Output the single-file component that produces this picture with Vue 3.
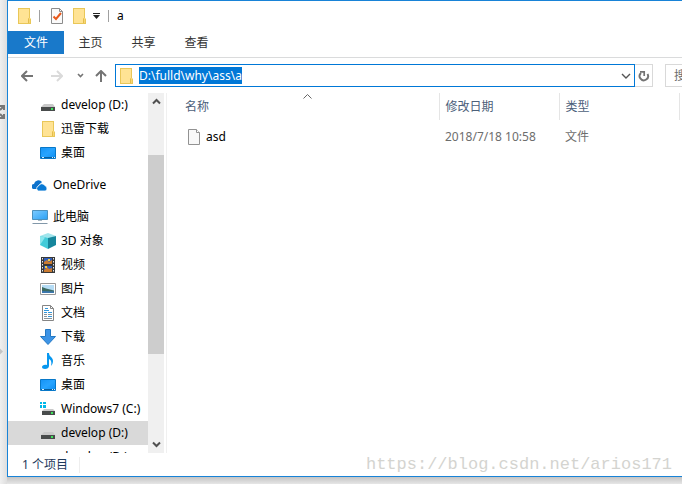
<template>
  <div class="desktop">
    <span class="backdrop-arrow">
      <svg width="5" height="14" viewBox="0 0 5 14">
        <path d="M0 1h4v4M0 5l4-4M0 9l4 4M0 13h4V9" fill="none" stroke="#777" stroke-width="2" />
      </svg>
    </span>
    <span class="backdrop-dot"></span>

    <main class="window">
      <header class="titlebar">
        <svg class="icon" viewBox="0 0 16 16"><use href="#i-folder" /></svg>
        <span class="bar"></span>
        <button class="plain" aria-label="属性">
          <svg class="icon" viewBox="0 0 16 16">
            <path d="M2.500.5h8l3 3v12h-11z" fill="#fafafa" stroke="#8c8c8c" />
            <path d="M10.500.5v3h3" fill="none" stroke="#8c8c8c" />
            <path d="M4.500 8.500l2.500 2.500 5-6" fill="none" stroke="#e8591c" stroke-width="2" />
          </svg>
        </button>
        <button class="plain" aria-label="新建文件夹">
          <svg class="icon" viewBox="0 0 16 16"><use href="#i-folder" /></svg>
        </button>
        <button class="plain more" aria-label="自定义">
          <svg width="7" height="6" viewBox="0 0 7 6"><path d="M0 0h7v1H0zM0 2h7L3.500 6z" fill="#222" /></svg>
        </button>
        <span class="bar"></span>
        <span class="title">a</span>
      </header>

      <nav class="tabs">
        <button v-for="tab in tabs" :key="tab" :class="{ active: tab === activeTab }" @click="activeTab = tab">
          {{ tab }}
        </button>
      </nav>

      <div class="toolbar">
        <div class="nav-buttons">
          <button class="plain" aria-label="后退">
            <svg width="12" height="12" viewBox="0 0 12 12"><path d="M12 6H1M6 1L1 6l5 5" fill="none" stroke="#747474" stroke-width="2" /></svg>
          </button>
          <button class="plain forward" aria-label="前进">
            <svg width="12" height="12" viewBox="0 0 12 12"><path d="M0 6h11M6 1l5 5-5 5" fill="none" stroke="#dadada" stroke-width="2" /></svg>
          </button>
          <button class="plain recent" aria-label="最近浏览的位置">
            <svg width="7" height="5" viewBox="0 0 7 5"><path d="M1 1l2.500 2.500L6 1" fill="none" stroke="#747474" stroke-width="1.600" /></svg>
          </button>
          <button class="plain" aria-label="向上">
            <svg width="12" height="12" viewBox="0 0 12 12"><path d="M6 12V1M1 6l5-5 5 5" fill="none" stroke="#747474" stroke-width="2" /></svg>
          </button>
        </div>
        <div class="address">
          <svg class="icon" viewBox="0 0 16 16"><use href="#i-folder" /></svg>
          <input ref="addressInput" v-model="path" aria-label="地址" spellcheck="false" />
          <button class="plain" aria-label="以前的位置">
            <svg width="10" height="6" viewBox="0 0 10 6"><path d="M1 1l4 4 4-4" fill="none" stroke="#555" stroke-width="1.400" /></svg>
          </button>
        </div>
        <button class="plain refresh" aria-label="刷新">
          <svg width="12" height="12" viewBox="0 0 12 12">
            <path d="M3 3A4.200 4.200 0 1 0 9.500 4" fill="none" stroke="#747474" stroke-width="1.900" />
            <path d="M2 1.800h4.200v4.200" fill="none" stroke="#747474" stroke-width="1.700" />
          </svg>
        </button>
        <input class="search" placeholder="搜索" aria-label="搜索" />
      </div>

      <div class="content">
        <aside class="sidebar">
          <div class="tree">
            <ul v-for="(group, g) in groups" :key="g">
              <li v-for="(item, i) in group" :key="i" :class="{ root: item.root, selected: item.selected }">
                <svg class="icon" viewBox="0 0 16 16"><use :href="'#i-' + item.icon" /></svg>
                <span>{{ item.name }}</span>
              </li>
            </ul>
          </div>
          <div class="scrollbar">
            <button class="plain" aria-label="向上滚动">
              <svg width="9" height="7" viewBox="0 0 9 7"><path d="M1 5.500L4.500 2 8 5.500" fill="none" stroke="#505050" stroke-width="2" /></svg>
            </button>
            <div class="track">
              <span class="before"></span>
              <span class="thumb"></span>
              <span class="after"></span>
            </div>
            <button class="plain" aria-label="向下滚动">
              <svg width="9" height="7" viewBox="0 0 9 7"><path d="M1 1.500L4.500 5 8 1.500" fill="none" stroke="#505050" stroke-width="2" /></svg>
            </button>
          </div>
        </aside>

        <section class="files">
          <table>
            <colgroup>
              <col class="col-name" />
              <col class="col-date" />
              <col class="col-type" />
              <col />
            </colgroup>
            <thead>
              <tr>
                <th>
                  名称
                  <svg class="sort" width="9" height="5" viewBox="0 0 9 5"><path d="M.5 4.500l4-4 4 4" fill="none" stroke="#666" /></svg>
                </th>
                <th>修改日期</th>
                <th>类型</th>
                <th></th>
              </tr>
            </thead>
            <tbody>
              <tr v-for="file in files" :key="file.name">
                <td>
                  <div class="file-name">
                    <svg class="icon" viewBox="0 0 16 16"><use href="#i-file" /></svg>
                    <span>{{ file.name }}</span>
                  </div>
                </td>
                <td>{{ file.date }}</td>
                <td>{{ file.type }}</td>
                <td></td>
              </tr>
            </tbody>
          </table>
        </section>
      </div>

      <footer class="status">
        <span>{{ files.length }} 个项目</span>
      </footer>
    </main>

    <span class="watermark">https://blog.csdn.net/arios171</span>

    <svg class="sprite" aria-hidden="true">
      <defs>
        <linearGradient id="screen" x1="0" y1="0" x2="1" y2="1">
          <stop offset="0" stop-color="#1593f5" />
          <stop offset=".5" stop-color="#27a4ff" />
          <stop offset="1" stop-color="#0c8df2" />
        </linearGradient>
        <linearGradient id="monitor" x1="0" y1="0" x2="1" y2="1">
          <stop offset="0" stop-color="#7ccbff" />
          <stop offset="1" stop-color="#2ba1f5" />
        </linearGradient>
      </defs>
      <symbol id="i-folder" viewBox="0 0 16 16">
        <path d="M2 0h12v10l1 1v5H2z" fill="#e9c758" />
        <path d="M3 1h10v14H3z" fill="#ffe394" />
        <path d="M12 10h2v5h-2z" fill="#f9d774" />
        <path d="M12.500 10.500v4.500" stroke="#e3bd4c" />
      </symbol>
      <symbol id="i-file" viewBox="0 0 16 16">
        <path d="M2.500.5h8l3 3v12h-11z" fill="#f8f8f8" stroke="#929292" />
        <path d="M10.500.5v3h3" fill="#fff" stroke="#929292" />
      </symbol>
      <symbol id="i-drive" viewBox="0 0 16 16">
        <path d="M4 7h9l2 3H1z" fill="#c9c9c9" />
        <path d="M1 10h14v4H1z" fill="#484b4b" />
        <path d="M11 11h2v2h-2z" fill="#3ee35b" />
      </symbol>
      <symbol id="i-windrive" viewBox="0 0 16 16">
        <path d="M0 1h2v2H0zM3 1h3v2H3zM0 4h2v3H0zM3 4h3v3H3z" fill="#00b7e8" />
        <path d="M4 8h9l2 2H2z" fill="#c9c9c9" />
        <path d="M2 10h13v4H2z" fill="#484b4b" />
        <path d="M11 11h2v2h-2z" fill="#3ee35b" />
      </symbol>
      <symbol id="i-desktop" viewBox="0 0 16 16">
        <path d="M.5 2.500h15v11H.5z" fill="url(#screen)" stroke="#0878c8" />
        <path d="M1 12.500h14" stroke="#075e9d" />
        <path d="M2 12.500h2M12 12.500h1M14 12.500h1" stroke="#d5efff" />
      </symbol>
      <symbol id="i-cloud" viewBox="0 0 16 16">
        <path d="M1 12a2.600 2.600 0 0 1 1-5 4.500 4.500 0 0 1 8-2L6 9l-1 3z" fill="#0d72cc" />
        <path d="M6.500 14a2.600 2.600 0 0 1 0-5 3.500 3.500 0 0 1 6.300-.5A3 3 0 0 1 13.500 14z" fill="#0879d5" stroke="#fff" stroke-width=".8" />
      </symbol>
      <symbol id="i-pc" viewBox="0 0 16 16">
        <path d="M.5 1.500h15v9H.5z" fill="url(#monitor)" stroke="#4c91bd" />
        <path d="M6 11h4v1H6z" fill="#a9bac5" />
        <path d="M1 14h14l1 1H0z" fill="#8298a9" />
      </symbol>
      <symbol id="i-cube" viewBox="0 0 16 16">
        <path d="M0 3l8-3 8 3-8 3z" fill="#a1e5ec" />
        <path d="M0 3l8 2v11l-8-4z" fill="#42cbd9" />
        <path d="M8 5l8-2v9l-8 4z" fill="#16869c" />
        <path d="M0 3l5 1.500L0 12z" fill="#8be6ed" />
      </symbol>
      <symbol id="i-video" viewBox="0 0 16 16">
        <path d="M1 0h14v16H1z" fill="#383838" />
        <path d="M2.500 1v15M13.500 1v15" stroke="#e8e8e8" stroke-dasharray="1.500 1.500" />
        <path d="M4 1h8v6H4zM4 9h8v6H4z" fill="#315fba" />
        <path d="M4 5l3-2 2 2 3-2v4H4zM4 13l3-3 2 2 3-1v4H4z" fill="#ca7b31" />
        <path d="M8 2h2v2H8zM5 9h2v2H5z" fill="#f2d049" />
      </symbol>
      <symbol id="i-picture" viewBox="0 0 16 16">
        <path d="M.5 2.500h15v11H.5z" fill="#fff" stroke="#989898" />
        <path d="M2 4h12v8H2z" fill="#b5dcf5" />
        <path d="M2 6l4 1.500 8 2V12H2z" fill="#3d6b62" />
        <path d="M2 10l12 .5V12H2z" fill="#3c78b0" />
      </symbol>
      <symbol id="i-document" viewBox="0 0 16 16">
        <path d="M2.500.5h8l3 3v12h-11z" fill="#fff" stroke="#858585" />
        <path d="M10.500.5v3h3" fill="none" stroke="#858585" />
        <path d="M5 3.500h3M4 5.500h5M4 7.500h3M8 7.500h4" stroke="#3197dc" />
        <path d="M4 9.500h3M8 9.500h4M4 11.500h3M4 13.500h8" stroke="#8a949b" />
        <path d="M8 11h4v1H8z" fill="#3197dc" />
      </symbol>
      <symbol id="i-download" viewBox="0 0 16 16">
        <path d="M5.500.5h5v7h5L8 15.500.5 7.500h5z" fill="#3d94e6" stroke="#2378c4" />
      </symbol>
      <symbol id="i-music" viewBox="0 0 16 16">
        <path d="M7 0h2c0 4 4 4 4 8 0 2-1 4-2 5 1-4 0-6-2-7v7c0 2-2 3-4 3s-3-1-3-2 2-3 5-2z" fill="#0797ef" />
      </symbol>
    </svg>
  </div>
</template>

<script setup>
import { onMounted, ref } from "vue";

const tabs = ["文件", "主页", "共享", "查看"];
const activeTab = ref("文件");
const path = ref("D:\\fulld\\why\\ass\\a");
const addressInput = ref(null);

const groups = [
  [
    { name: "develop (D:)", icon: "drive" },
    { name: "迅雷下载", icon: "folder" },
    { name: "桌面", icon: "desktop" },
  ],
  [{ name: "OneDrive", icon: "cloud", root: true }],
  [
    { name: "此电脑", icon: "pc", root: true },
    { name: "3D 对象", icon: "cube" },
    { name: "视频", icon: "video" },
    { name: "图片", icon: "picture" },
    { name: "文档", icon: "document" },
    { name: "下载", icon: "download" },
    { name: "音乐", icon: "music" },
    { name: "桌面", icon: "desktop" },
    { name: "Windows7 (C:)", icon: "windrive" },
    { name: "develop (D:)", icon: "drive", selected: true },
    { name: "develop (D:)", icon: "drive" },
  ],
];

const files = [{ name: "asd", date: "2018/7/18 10:58", type: "文件" }];

onMounted(() => {
  addressInput.value.focus();
  addressInput.value.select();
});
</script>

<style>
body {
  margin: 0;
}
</style>

<style scoped>
.desktop {
  position: relative;
  box-sizing: border-box;
  height: 100vh;
  padding: 0 0 7px 7px;
  overflow: hidden;
  background:
    linear-gradient(#c4c4c4, #e6e6e6) 7px 100% / 100% 7px no-repeat,
    linear-gradient(90deg, #f0f0f0, #dedede 7px);
  font: 12px/16px "Noto Sans", "Noto Sans CJK SC", sans-serif;
  color: #000;
}

.backdrop-arrow {
  position: absolute;
  left: 0;
  top: 105px;
}

.backdrop-dot {
  position: absolute;
  left: -3px;
  top: 349px;
  width: 5px;
  height: 5px;
  background: #c4c4c4;
  transform: rotate(45deg);
}

.window {
  display: flex;
  flex-direction: column;
  box-sizing: border-box;
  height: 100%;
  border: 1px solid #1883d7;
  border-right: 0;
  background: #fff;
}

button,
input {
  font: inherit;
}

.plain {
  display: flex;
  align-items: center;
  justify-content: center;
  padding: 0;
  border: 0;
  background: none;
}

svg {
  display: block;
}

.icon {
  flex: none;
  width: 16px;
  height: 16px;
}

.titlebar {
  display: flex;
  align-items: center;
  height: 30px;
  padding-left: 8px;
}

.titlebar .bar {
  width: 1px;
  height: 12px;
  margin: 0 9px 0 7px;
  background: #a0a0a0;
}

.titlebar .plain + .plain {
  margin-left: 6px;
}

.titlebar .more + .bar {
  margin: 0 8px;
}

.tabs {
  display: flex;
  height: 26px;
  border-bottom: 1px solid #dadbdc;
}

.tabs button {
  width: 53px;
  height: 23px;
  padding: 0;
  border: 0;
  background: none;
  color: #333;
}

.tabs button.active {
  width: 56px;
  background: #1979ca;
  color: #fff;
}

.toolbar {
  display: flex;
  align-items: center;
  height: 35px;
}

.nav-buttons {
  display: flex;
  align-items: center;
  flex: none;
  box-sizing: border-box;
  width: 107px;
  padding-left: 13px;
}

.nav-buttons .forward {
  margin-left: 18px;
}

.nav-buttons .recent {
  margin: 0 11px 0 14px;
}

.address {
  display: flex;
  align-items: center;
  flex: 1;
  box-sizing: border-box;
  min-width: 0;
  height: 23px;
  padding: 0 3px 0 2px;
  border: 1px solid #0078d7;
}

.address input {
  flex: 1;
  min-width: 0;
  height: 17px;
  margin-left: 5px;
  padding: 0;
  border: 0;
  outline: 0;
  background: none;
}

.address input::selection {
  background: #0078d7;
  color: #fff;
}

.refresh {
  flex: none;
  box-sizing: border-box;
  width: 18px;
  height: 23px;
  margin-right: 12px;
  border: 1px solid #d9d9d9;
  border-left: 0;
}

.search {
  flex: none;
  box-sizing: border-box;
  width: 17px;
  height: 23px;
  padding: 0 0 0 8px;
  border: 1px solid #d9d9d9;
  border-right: 0;
  outline: 0;
}

.search::placeholder {
  color: #6d6d6d;
}

.content {
  display: flex;
  flex: 1;
  min-height: 0;
}

.sidebar {
  display: flex;
  flex: none;
  box-sizing: border-box;
  width: 159px;
  padding-right: 2px;
  border-right: 1px solid #f0f0f0;
}

.tree {
  flex: 1;
  overflow: hidden;
}

.tree ul {
  margin: 0 0 8px;
  padding: 0;
  list-style: none;
}

.tree li {
  display: flex;
  align-items: center;
  gap: 5px;
  height: 24px;
  padding-left: 32px;
  white-space: nowrap;
}

.tree li.root {
  padding-left: 24px;
}

.tree li.selected {
  background: #d9d9d9;
}

.scrollbar {
  display: flex;
  flex-direction: column;
  width: 16px;
  background: #f0f0f0;
}

.scrollbar .plain {
  height: 17px;
}

.track {
  display: flex;
  flex-direction: column;
  flex: 1;
}

.before {
  flex: 45;
}

.thumb {
  flex: 199;
  background: #cdcdcd;
}

.after {
  flex: 82;
}

.files {
  flex: 1;
  min-width: 0;
  padding-left: 9px;
}

table {
  width: 100%;
  border-collapse: collapse;
  table-layout: fixed;
}

.col-name {
  width: 263px;
}

.col-date,
.col-type {
  width: 120px;
}

th {
  position: relative;
  height: 27px;
  padding: 0 0 0 6px;
  border-right: 1px solid #e5e5e5;
  color: #4c607a;
  font-weight: 400;
  text-align: left;
}

th:first-child {
  padding-left: 9px;
}

th:last-child {
  border: 0;
}

.sort {
  position: absolute;
  top: 1px;
  left: calc(50% - 4px);
}

td {
  height: 22px;
  padding: 6px 0 0 6px;
  color: #6d6d6d;
}

.file-name {
  display: flex;
  align-items: center;
  gap: 4px;
  padding-left: 4px;
  color: #000;
}

.status {
  display: flex;
  align-items: center;
  height: 23px;
  padding-left: 14px;
  color: #1e395b;
}

.status span {
  padding-right: 11px;
  border-right: 1px solid #eee;
}

.watermark {
  position: absolute;
  right: 10px;
  bottom: 9px;
  color: #d4d4d0;
  font: 17px/20px "Liberation Mono", monospace;
}

.sprite {
  position: absolute;
  width: 0;
  height: 0;
}
</style>
